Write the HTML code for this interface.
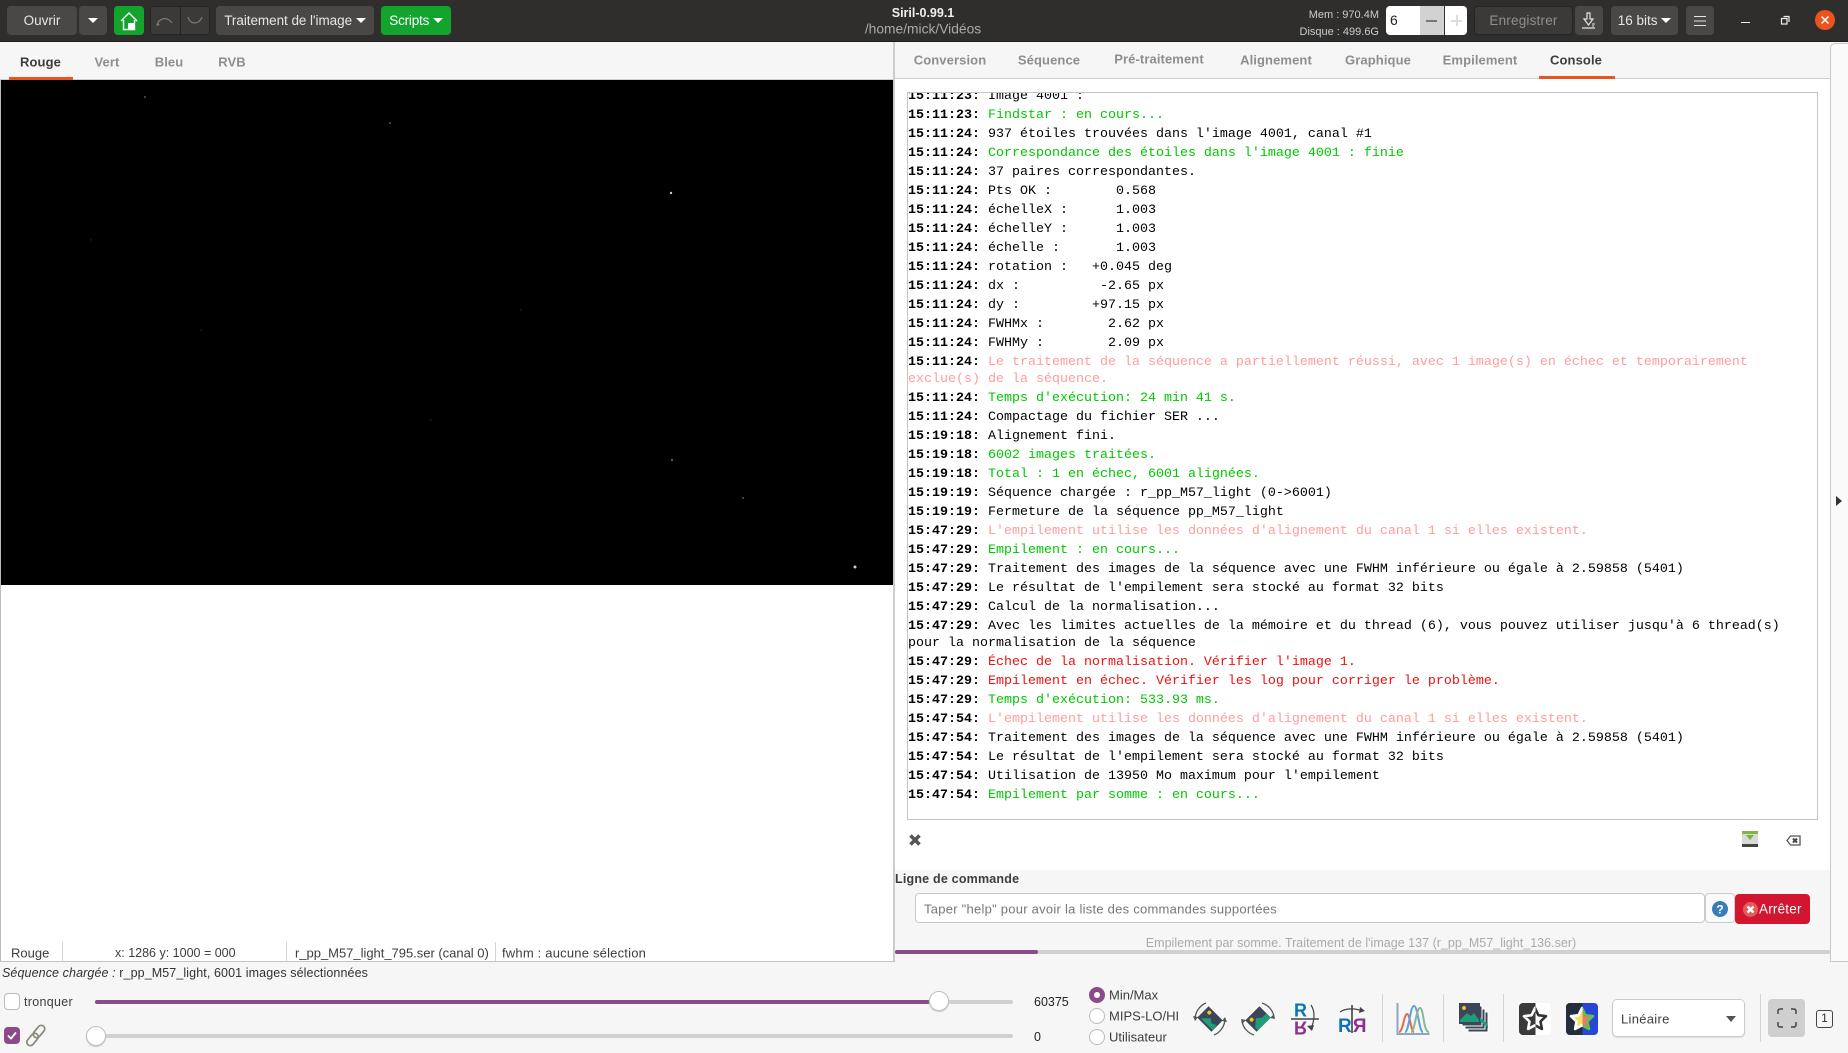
<!DOCTYPE html>
<html lang="fr"><head><meta charset="utf-8"><title>Siril</title>
<style>
*{box-sizing:border-box}
html,body{margin:0;padding:0;background:#f6f6f6}
body{width:1848px;height:1053px;position:relative;overflow:hidden;font-family:"Liberation Sans",sans-serif;font-size:13.5px;color:#3d3d3d}
.a{position:absolute;white-space:nowrap}
.t{transform:translate(-50%,-50%)}
.v{transform:translateY(-50%)}
.btn{position:absolute;top:6px;height:29px;background:#4a4846;border-radius:4px;color:#e6e6e6;display:flex;align-items:center;justify-content:center}
.caret{display:inline-block;width:0;height:0;border-left:5px solid transparent;border-right:5px solid transparent;border-top:5px solid #fff}
.tab{position:absolute;transform:translate(-50%,-50%);font-weight:bold;color:#8e8e8e;font-size:13px;letter-spacing:.1px;white-space:nowrap}
.tab.on{color:#3d3d3d}
#log{position:absolute;left:907px;top:92px;width:911px;height:728px;background:#fff;border:1px solid #c4c4c4;overflow:hidden}
#in{position:absolute;left:0;top:-5px;width:904px;font-family:"Liberation Mono",monospace;font-size:13.33px;line-height:17px;color:#000}
#in p{margin:0 0 2px;white-space:pre-wrap;word-break:normal}
b{font-weight:bold}
.g{color:#00c800}.s{color:#ff9c9c}.r{color:#f01010}
.sep{position:absolute;width:1px;background:#d5d5d5}
.rad{position:absolute;width:16px;height:16px;border-radius:50%;border:1px solid #bbb;background:#fff}
</style></head><body>

<!-- header -->
<div class="a" style="left:0;top:0;width:1848px;height:42px;background:#2f2e2c;border-bottom:1px solid #1c1c1c"></div>
<div class="btn" style="left:7px;width:70px">Ouvrir</div>
<div class="btn" style="left:79px;width:28px"><span class="caret"></span></div>
<div class="btn" style="left:114px;width:30px;background:#12a42d">
<svg width="18" height="20" viewBox="0 0 18 20"><path d="M1 10 9 2l8 8M3.500 9v9.500h11V9" fill="none" stroke="#fff" stroke-width="1.400"/><rect x="8" y="12" width="6.500" height="6.500" fill="#fff"/></svg></div>
<div class="btn" style="left:150px;width:60px;background:#3c3a38;border:1px solid #262626"></div>
<div class="a" style="left:180px;top:6px;width:1px;height:29px;background:#222"></div>
<svg class="a" style="left:155px;top:14px" width="50" height="14" viewBox="0 0 50 14"><path d="M2 11C4 4 12 2 17 9M33 3c2 8 11 8 14 0" fill="none" stroke="#777" stroke-width="1.300"/><path d="M1 12l4-1-2.500-3z" fill="#777"/></svg>
<div class="btn" style="left:216px;width:158px;font-size:13.5px;letter-spacing:-.05px">Traitement de l'image&nbsp;<span class="caret"></span></div>
<div class="btn" style="left:381px;width:70px;background:#12a42d;color:#fff;letter-spacing:-.2px">Scripts&nbsp;<span class="caret"></span></div>
<div class="a t" style="left:923px;top:13px;color:#f0f0f0;font-weight:bold;font-size:12.5px">Siril-0.99.1</div>
<div class="a t" style="left:923px;top:29px;color:#aaa;font-size:13.800px">/home/mick/Vidéos</div>
<div class="a" style="right:469px;top:7px;color:#ccc;font-size:11px;line-height:17px;text-align:right">Mem : 970.4M<br>Disque : 499.6G</div>
<div class="a" style="left:1386px;top:6px;width:81px;height:29px;background:#fff;border-radius:4px;overflow:hidden;color:#222">
<span class="a" style="left:4px;top:6px;font-size:14px">6</span>
<span class="a" style="left:34px;top:0;width:24px;height:29px;background:#d2d2d2"></span>
<span class="a" style="left:40px;top:14px;width:11px;height:2px;background:#777"></span>
<span class="a" style="left:58px;top:0;width:1px;height:29px;background:#333"></span>
<span class="a" style="left:65px;top:14px;width:11px;height:1.500px;background:#ddd"></span>
<span class="a" style="left:70px;top:9px;width:1.500px;height:11px;background:#ddd"></span>
</div>
<div class="btn" style="left:1474px;width:99px;background:#3c3a38;border:1px solid #262626;color:#8f8f8f;letter-spacing:.2px">Enregistrer</div>
<div class="btn" style="left:1575px;width:28px">
<svg width="18" height="20" viewBox="0 0 18 20"><path d="M7 2h3v6h3l-4.500 6L4 8h3zM2 17h13" fill="none" stroke="#e4e4e4" stroke-width="1.200"/><path d="M12 13h3M12 15h2" stroke="#e4e4e4"/></svg></div>
<div class="btn" style="left:1611px;width:67px">16 bits&nbsp;<span class="caret"></span></div>
<div class="btn" style="left:1686px;width:28px">
<svg width="14" height="12" viewBox="0 0 14 12"><path d="M1 1.500h12M1 6h12M1 10.500h12" stroke="#e4e4e4" stroke-width="1.100"/></svg></div>
<div class="a" style="left:1741px;top:21.500px;width:9px;height:1.500px;background:#eee"></div>
<svg class="a" style="left:1780px;top:15px" width="10" height="10" viewBox="0 0 10 10"><path d="M1.500 3.500h5.500v5.500H1.500zM3.500 1.500H9V7" fill="none" stroke="#eee" stroke-width="1.200"/></svg>
<svg class="a" style="left:1815px;top:10px" width="20" height="20" viewBox="0 0 20 20"><circle cx="10" cy="10" r="10" fill="#e95420"/><path d="M6.500 6.500l7 7M13.500 6.500l-7 7" stroke="#fff" stroke-width="1.500"/></svg>

<!-- left pane -->
<div class="a" style="left:0;top:42px;width:894px;height:38px;background:#f6f6f6;border-bottom:1px solid #cfcfcf"></div>
<div class="a" style="left:9px;top:77px;width:64px;height:3px;background:#e95420"></div>
<div class="tab on" style="left:40.500px;top:61.500px">Rouge</div>
<div class="tab" style="left:107px;top:61.500px">Vert</div>
<div class="tab" style="left:169px;top:61.500px">Bleu</div>
<div class="tab" style="left:232px;top:61.500px">RVB</div>
<div class="a" style="left:0;top:80px;width:894px;height:881px;background:#fff"></div>
<div class="a" style="left:1px;top:80px;width:893px;height:505px;background:#000"></div>
<svg class="a" style="left:1px;top:80px" width="893" height="505" viewBox="0 0 893 505"><g fill="#ccc"><circle cx="670" cy="113" r="1.200"/><circle cx="854" cy="487" r="1.500"/></g><g fill="#555"><circle cx="671" cy="380" r="1.200"/><circle cx="144" cy="17" r="1"/><circle cx="389" cy="43" r="1"/><circle cx="742" cy="418" r="1"/></g><g fill="#2a2a2a"><circle cx="520" cy="230" r=".8"/><circle cx="200" cy="250" r=".7"/><circle cx="430" cy="340" r=".7"/><circle cx="90" cy="160" r=".7"/></g></svg>
<div class="a" style="left:0;top:80px;width:1px;height:881px;background:#bbb"></div>
<div class="a" style="left:893px;top:42px;width:2px;height:920px;background:#cdcdcd"></div>
<div class="a v" style="left:11px;top:953px;font-size:13px">Rouge</div>
<div class="sep" style="left:62px;top:942px;height:19px"></div>
<div class="a v" style="left:115px;top:953px;font-size:12.500px">x: 1286 y: 1000 = 000</div>
<div class="sep" style="left:286px;top:942px;height:19px"></div>
<div class="a v" style="left:295px;top:953px;font-size:13px;letter-spacing:-.02px">r_pp_M57_light_795.ser (canal 0)</div>
<div class="sep" style="left:495px;top:942px;height:19px"></div>
<div class="a v" style="left:502px;top:953px;font-size:13px;letter-spacing:.2px">fwhm : aucune sélection</div>
<div class="a" style="left:0;top:961px;width:895px;height:1px;background:#c4c4c4"></div>

<!-- right pane -->
<div class="a" style="left:895px;top:42px;width:935px;height:37px;background:#f6f6f6;border-bottom:1px solid #cfcfcf"></div>
<div class="tab" style="left:950px;top:60px">Conversion</div>
<div class="tab" style="left:1049px;top:60px">Séquence</div>
<div class="tab" style="left:1159px;top:59px">Pré-traitement</div>
<div class="tab" style="left:1276px;top:60px">Alignement</div>
<div class="tab" style="left:1378px;top:60px">Graphique</div>
<div class="tab" style="left:1480px;top:60px">Empilement</div>
<div class="tab on" style="left:1576px;top:60px">Console</div>
<div class="a" style="left:1539px;top:76px;width:76px;height:3px;background:#e95420"></div>
<div class="a" style="left:895px;top:79px;width:935px;height:791px;background:#fff"></div>
<div class="a" style="left:1830px;top:43px;width:18px;height:919px;background:#fafafa;border:1px solid #c8c8c8;border-radius:5px 0 0 0;border-right:0"></div>
<svg class="a" style="left:1835px;top:496px" width="8" height="10"><path d="M1 0l6 5-6 5z" fill="#333"/></svg>

<div id="log"><div id="in">
<p><b>15:11:23: </b>Image 4001 :</p>
<p><b>15:11:23: </b><span class="g">Findstar : en cours...</span></p>
<p><b>15:11:24: </b>937 étoiles trouvées dans l'image 4001, canal #1</p>
<p><b>15:11:24: </b><span class="g">Correspondance des étoiles dans l'image 4001 : finie</span></p>
<p><b>15:11:24: </b>37 paires correspondantes.</p>
<p><b>15:11:24: </b>Pts OK :        0.568</p>
<p><b>15:11:24: </b>échelleX :      1.003</p>
<p><b>15:11:24: </b>échelleY :      1.003</p>
<p><b>15:11:24: </b>échelle :       1.003</p>
<p><b>15:11:24: </b>rotation :   +0.045 deg</p>
<p><b>15:11:24: </b>dx :          -2.65 px</p>
<p><b>15:11:24: </b>dy :         +97.15 px</p>
<p><b>15:11:24: </b>FWHMx :        2.62 px</p>
<p><b>15:11:24: </b>FWHMy :        2.09 px</p>
<p><b>15:11:24: </b><span class="s">Le traitement de la séquence a partiellement réussi, avec 1 image(s) en échec et temporairement<br>exclue(s) de la séquence.</span></p>
<p><b>15:11:24: </b><span class="g">Temps d'exécution: 24 min 41 s.</span></p>
<p><b>15:11:24: </b>Compactage du fichier SER ...</p>
<p><b>15:19:18: </b>Alignement fini.</p>
<p><b>15:19:18: </b><span class="g">6002 images traitées.</span></p>
<p><b>15:19:18: </b><span class="g">Total : 1 en échec, 6001 alignées.</span></p>
<p><b>15:19:19: </b>Séquence chargée : r_pp_M57_light (0-&gt;6001)</p>
<p><b>15:19:19: </b>Fermeture de la séquence pp_M57_light</p>
<p><b>15:47:29: </b><span class="s">L'empilement utilise les données d'alignement du canal 1 si elles existent.</span></p>
<p><b>15:47:29: </b><span class="g">Empilement : en cours...</span></p>
<p><b>15:47:29: </b>Traitement des images de la séquence avec une FWHM inférieure ou égale à 2.59858 (5401)</p>
<p><b>15:47:29: </b>Le résultat de l'empilement sera stocké au format 32 bits</p>
<p><b>15:47:29: </b>Calcul de la normalisation...</p>
<p><b>15:47:29: </b>Avec les limites actuelles de la mémoire et du thread (6), vous pouvez utiliser jusqu'à 6 thread(s)<br>pour la normalisation de la séquence</p>
<p><b>15:47:29: </b><span class="r">Échec de la normalisation. Vérifier l'image 1.</span></p>
<p><b>15:47:29: </b><span class="r">Empilement en échec. Vérifier les log pour corriger le problème.</span></p>
<p><b>15:47:29: </b><span class="g">Temps d'exécution: 533.93 ms.</span></p>
<p><b>15:47:54: </b><span class="s">L'empilement utilise les données d'alignement du canal 1 si elles existent.</span></p>
<p><b>15:47:54: </b>Traitement des images de la séquence avec une FWHM inférieure ou égale à 2.59858 (5401)</p>
<p><b>15:47:54: </b>Le résultat de l'empilement sera stocké au format 32 bits</p>
<p><b>15:47:54: </b>Utilisation de 13950 Mo maximum pour l'empilement</p>
<p><b>15:47:54: </b><span class="g">Empilement par somme : en cours...</span></p>
</div></div>

<svg class="a" style="left:908px;top:833px" width="14" height="14" viewBox="0 0 14 14"><path d="M2.500 2.500l9 9M11.500 2.500l-9 9" stroke="#555" stroke-width="3.600"/></svg>
<svg class="a" style="left:1742px;top:831px" width="16" height="16" viewBox="0 0 16 16"><rect x="0" y="0" width="16" height="3" fill="#83b44a"/><rect x="0" y="3" width="16" height="10" fill="#d9d9d9"/><path d="M4 4h8l-4 5z" fill="#7fb23a"/><rect x="0" y="13" width="16" height="3" fill="#444"/></svg>
<svg class="a" style="left:1786px;top:835px" width="15" height="11" viewBox="0 0 15 11"><path d="M1 5.500 4.500 1H14v9H4.500z" fill="#fff" stroke="#555" stroke-width="1.300"/><path d="M7 3.500l4 4M11 3.500l-4 4" stroke="#444" stroke-width="2"/></svg>

<div class="a" style="left:895px;top:870px;width:935px;height:92px;background:#f6f6f6"></div>
<div class="a v" style="left:895px;top:879px;font-weight:bold;font-size:12.5px;letter-spacing:.2px">Ligne de commande</div>
<div class="a" style="left:915px;top:893px;width:790px;height:30px;background:#fff;border:1px solid #c9c9c9;border-radius:4px"></div>
<div class="a v" style="left:924px;top:908.500px;color:#777;font-size:13px;letter-spacing:.25px">Taper "help" pour avoir la liste des commandes supportées</div>
<div class="a" style="left:1705px;top:893px;width:30px;height:30px;background:#fafafa;border:1px solid #ccc;border-radius:4px"></div>
<svg class="a" style="left:1712px;top:901px" width="16" height="16" viewBox="0 0 16 16"><circle cx="8" cy="8" r="8" fill="#3a7dbd"/><text x="8" y="12.500" text-anchor="middle" font-family="Liberation Sans" font-weight="bold" font-size="12" fill="#fff">?</text></svg>
<div class="a" style="left:1735px;top:894px;width:75px;height:30px;background:#d2162f;border-radius:4px"></div>
<svg class="a" style="left:1743px;top:902px" width="15" height="15" viewBox="0 0 15 15"><circle cx="7.500" cy="7.500" r="7.500" fill="#e85a5a"/><path d="M4.500 4.500l6 6M10.500 4.500l-6 6" stroke="#fff" stroke-width="2.400"/></svg>
<div class="a v" style="left:1759px;top:909px;color:#fff;font-size:13.5px;letter-spacing:.2px">Arrêter</div>
<div class="a t" style="left:1361px;top:942.500px;color:#aaa;font-size:12.5px;letter-spacing:.02px">Empilement par somme. Traitement de l'image 137 (r_pp_M57_light_136.ser)</div>
<div class="a" style="left:895px;top:950px;width:935px;height:4px;background:#d0d0d0;border-radius:2px"></div>
<div class="a" style="left:895px;top:950px;width:143px;height:4px;background:#8c4a88;border-radius:2px"></div>

<!-- bottom -->
<div class="a v" style="left:2px;top:973px;font-size:12.5px;color:#333;letter-spacing:.1px"><i>Séquence chargée :</i> r_pp_M57_light, 6001 images sélectionnées</div>
<div class="a" style="left:4px;top:993px;width:16px;height:17px;background:#fff;border:1px solid #bbb;border-radius:4px"></div>
<div class="a v" style="left:24px;top:1002px;font-size:12.500px;letter-spacing:.3px">tronquer</div>
<div class="a" style="left:95px;top:999.500px;width:918px;height:4px;background:#d0d0d0;border-radius:2px"></div>
<div class="a" style="left:95px;top:999.500px;width:843px;height:4px;background:#8c4a88;border-radius:2px"></div>
<div class="a" style="left:929px;top:991px;width:20px;height:20px;border-radius:50%;background:#fff;border:1px solid #bfbfbf;box-shadow:0 1px 1px #ccc"></div>
<div class="a v" style="left:1034px;top:1002px;font-size:12.500px;color:#222">60375</div>
<div class="a" style="left:4px;top:1027px;width:16px;height:17px;background:#8c4a88;border-radius:4px"></div>
<svg class="a" style="left:6px;top:1030px" width="12" height="11"><path d="M2 5.500l3 3 5-6" fill="none" stroke="#fff" stroke-width="1.800"/></svg>
<svg class="a" style="left:23px;top:1023px" width="26" height="25" viewBox="0 0 26 25"><g fill="none" stroke="#8a8a78" stroke-width="1.700"><rect x="12.500" y="1.500" width="7" height="14" rx="3.500" transform="rotate(40 16 8.500)"/><rect x="6" y="9.500" width="7" height="14" rx="3.500" transform="rotate(40 9.500 16.500)"/></g></svg>
<div class="a" style="left:95px;top:1034px;width:918px;height:4px;background:#d0d0d0;border-radius:2px"></div>
<div class="a" style="left:86px;top:1026px;width:20px;height:20px;border-radius:50%;background:#fff;border:1px solid #bfbfbf;box-shadow:0 1px 1px #ccc"></div>
<div class="a v" style="left:1034px;top:1037px;font-size:12.500px;color:#222">0</div>

<div class="rad" style="left:1089px;top:987px;background:#8c4a88;border-color:#8c4a88"></div>
<div class="a" style="left:1094px;top:992px;width:6px;height:6px;border-radius:50%;background:#fff"></div>
<div class="a v" style="left:1109px;top:995px;font-size:13px">Min/Max</div>
<div class="rad" style="left:1089px;top:1008px"></div>
<div class="a v" style="left:1109px;top:1016px;font-size:13px">MIPS-LO/HI</div>
<div class="rad" style="left:1089px;top:1029px"></div>
<div class="a v" style="left:1109px;top:1037px;font-size:13px">Utilisateur</div>

<!-- rotate icons -->
<svg class="a" style="left:1192px;top:1001px" width="36" height="36" viewBox="0 0 36 36"><g transform="rotate(45 18 18)"><rect x="8" y="10" width="20" height="16" fill="#3d4558"/><path d="M11 24l7-7 4 3 4-2 2 2v4H10z" fill="#1f9c78"/><circle cx="13" cy="14" r="2" fill="#f1c232"/></g><path d="M3 17C4 9 9 4 14 2M33 19c-1 8-6 13-11 15" fill="none" stroke="#555" stroke-width="1.300"/><path d="M1 15l5 1-3 4zM35 21l-5-1 3-4z" fill="#555"/></svg>
<svg class="a" style="left:1240px;top:1001px" width="36" height="36" viewBox="0 0 36 36"><g transform="rotate(-45 18 18)"><rect x="8" y="10" width="20" height="16" fill="#3d4558"/><path d="M10 26v-4l7-6 5 4 6 0v6z" fill="#1f9c78"/><circle cx="13" cy="14" r="2" fill="#f1c232"/></g><path d="M22 2c6 2 11 7 12 14M14 34C8 32 3 27 2 20" fill="none" stroke="#555" stroke-width="1.300"/><path d="M35 18l-5-1 4-4zM1 18l5 1-4 4z" fill="#555"/></svg>
<svg class="a" style="left:1290px;top:1001px" width="30" height="34" viewBox="0 0 30 34"><text x="4" y="15.500" font-family="Liberation Sans" font-weight="bold" font-size="18" fill="#0d72b9">R</text><text x="4" y="-20.500" transform="scale(1,-1)" font-family="Liberation Sans" font-weight="bold" font-size="18" fill="#8e2f92">R</text><path d="M1 18h28" stroke="#444" stroke-width="1.600"/><path d="M21 4c4 6 4 14 0 24" fill="none" stroke="#444" stroke-width="1.200"/><path d="M17 25l5 5 2-6z" fill="#444"/></svg>
<svg class="a" style="left:1338px;top:1002px" width="30" height="32" viewBox="0 0 30 32"><text x="0" y="30" font-family="Liberation Sans" font-weight="bold" font-size="19" fill="#0d72b9">R</text><text x="-28.500" y="30" transform="scale(-1,1)" font-family="Liberation Sans" font-weight="bold" font-size="19" fill="#8e2f92">R</text><path d="M14 3v28" stroke="#444" stroke-width="1.600"/><path d="M2 10c6-4 15-4 22-1" fill="none" stroke="#444" stroke-width="1.200"/><path d="M22 5l5 4-6 2z" fill="#444"/></svg>
<div class="sep" style="left:1382px;top:994px;height:48px"></div>
<svg class="a" style="left:1396px;top:1003px" width="34" height="33" viewBox="0 0 34 33"><path d="M1.500 0v31h32" fill="none" stroke="#8fa8ba" stroke-width="2"/><path d="M3 29c4 0 5-18 8-18s4 18 7 18" fill="none" stroke="#e8694a" stroke-width="2"/><path d="M9 29c4 0 5-26 9-26s5 26 9 26" fill="none" stroke="#5ca3dc" stroke-width="2"/><path d="M15 29c4 0 5-24 9-24s3 24 9 24" fill="none" stroke="#8ab890" stroke-width="2"/></svg>
<div class="sep" style="left:1443px;top:994px;height:48px"></div>
<svg class="a" style="left:1459px;top:1003px" width="30" height="32" viewBox="0 0 30 32"><rect x="9" y="9" width="20" height="20" fill="#3d4558" stroke="#fff"/><rect x="6" y="6" width="20" height="20" fill="#3d4558" stroke="#fff"/><rect x="3" y="3" width="20" height="20" fill="#3d4558" stroke="#fff"/><rect x="0" y="0" width="21" height="21" fill="#3d4558"/><path d="M1 17l7-7 4 3 3-3 5 7v2H1zM21 14l8 8v3l-8-7z" fill="#1f9c78"/><circle cx="5" cy="5" r="2" fill="#f1c232"/></svg>
<div class="sep" style="left:1503px;top:994px;height:48px"></div>
<svg class="a" style="left:1519px;top:1003px" width="32" height="32" viewBox="0 0 32 32"><defs><clipPath id="cl"><rect width="16.500" height="32"/></clipPath><clipPath id="cr"><rect x="16.500" width="16" height="32"/></clipPath></defs><rect width="32" height="32" rx="4" fill="#fff"/><path d="M4 0h12.500v32H4a4 4 0 0 1-4-4V4a4 4 0 0 1 4-4z" fill="#3a3a3a"/><path clip-path="url(#cl)" d="M16 5l3.400 7.200 7.600 1-5.500 5.300 1.400 7.500-6.900-3.700-6.900 3.700 1.400-7.500L5 13.200l7.600-1z" fill="#3a3a3a" stroke="#fff" stroke-width="2.600" stroke-linejoin="round"/><path clip-path="url(#cr)" d="M16 5l3.400 7.200 7.600 1-5.500 5.300 1.400 7.500-6.900-3.700-6.900 3.700 1.400-7.500L5 13.200l7.600-1z" fill="#fff" stroke="#333" stroke-width="2.600" stroke-linejoin="round"/></svg>
<svg class="a" style="left:1566px;top:1003px" width="32" height="32" viewBox="0 0 32 32"><rect width="32" height="32" rx="4" fill="#2745d6"/><path d="M4 0h12.500v32H4a4 4 0 0 1-4-4V4a4 4 0 0 1 4-4z" fill="#222d3d"/><path clip-path="url(#cl)" d="M16 5l3.400 7.200 7.600 1-5.500 5.300 1.400 7.500-6.900-3.700-6.900 3.700 1.400-7.500L5 13.200l7.600-1z" fill="#efe16a" stroke="#fff" stroke-width="2.600" stroke-linejoin="round"/><path clip-path="url(#cr)" d="M16 5l3.400 7.200 7.600 1-5.500 5.300 1.400 7.500-6.900-3.700-6.900 3.700 1.400-7.500L5 13.200l7.600-1z" fill="#f0786a" stroke="#5fc04f" stroke-width="2.600" stroke-linejoin="round"/></svg>
<div class="a" style="left:1612px;top:999px;width:133px;height:38px;background:#fff;border:1px solid #ccc;border-radius:5px;box-shadow:0 1px 1px #ddd"></div>
<div class="a v" style="left:1621px;top:1019px;font-size:13px;letter-spacing:.3px">Linéaire</div>
<div class="a" style="left:1726px;top:1016px;width:0;height:0;border-left:5px solid transparent;border-right:5px solid transparent;border-top:6px solid #555"></div>
<div class="sep" style="left:1760px;top:994px;height:48px"></div>
<div class="a" style="left:1768px;top:999px;width:37px;height:38px;background:#cfcfcf;border-radius:4px"></div>
<svg class="a" style="left:1777px;top:1008px" width="20" height="20" viewBox="0 0 20 20"><path d="M1 6V3a2 2 0 0 1 2-2h3M14 1h3a2 2 0 0 1 2 2v3M19 14v3a2 2 0 0 1-2 2h-3M6 19H3a2 2 0 0 1-2-2v-3" fill="none" stroke="#444" stroke-width="1.500"/></svg>
<div class="a" style="left:1816px;top:1010px;width:17px;height:18px;border:1.500px solid #444;border-radius:3px;font-size:12px;line-height:15px;text-align:center;color:#333">1</div>
</body></html>
